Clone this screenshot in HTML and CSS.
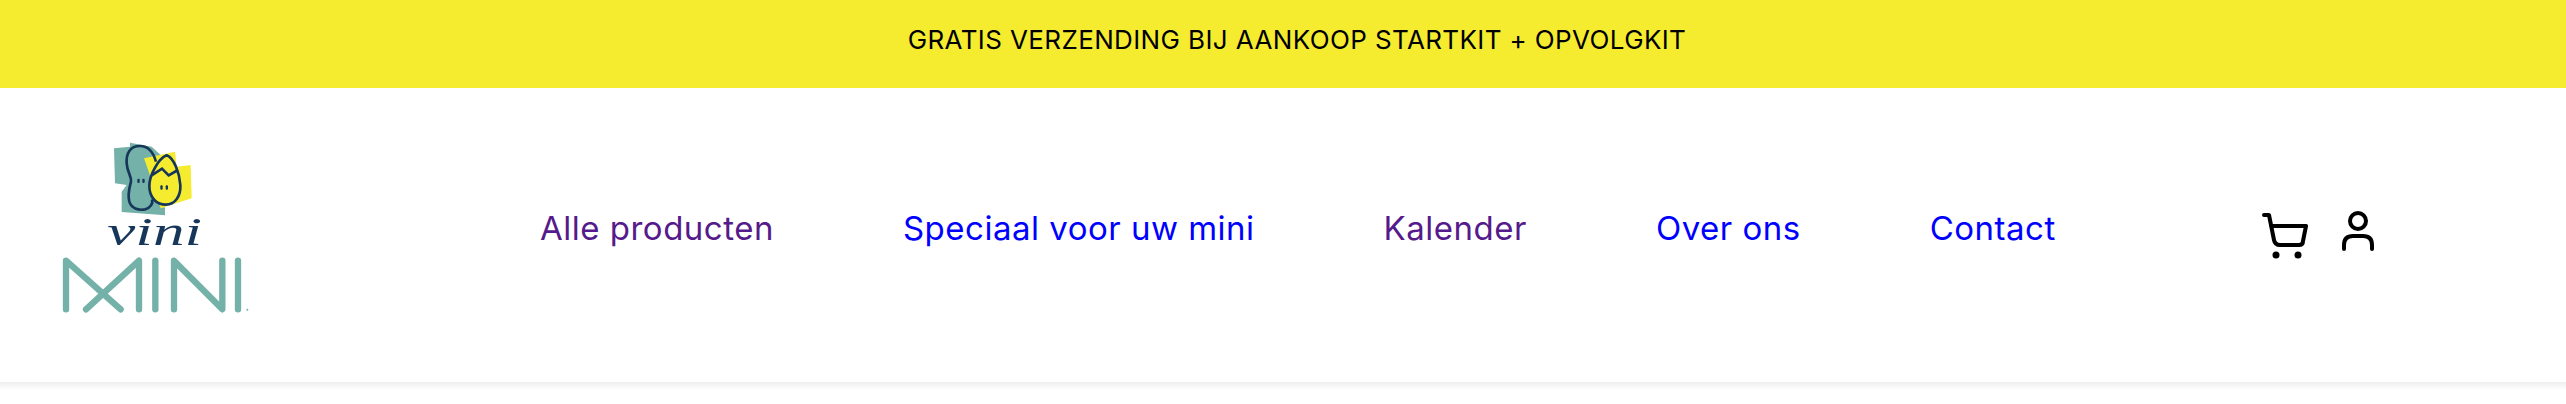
FILE: index.html
```html
<!DOCTYPE html>
<html lang="nl">
    <head>
        <meta charset="UTF-8" />
        <meta name="viewport" content="width=device-width, initial-scale=1.0" />
        <title>Vini Mini</title>
        <link rel="stylesheet" href="styles.css">
    </head>
    <body>
        <div class="promo-bar">
            <p>GRATIS VERZENDING BIJ AANKOOP STARTKIT + OPVOLGKIT</p>
        </div>
        <header class="site-header">
            <a class="logo" href="#" aria-label="Vini Mini">
                <svg width="240" height="200" viewBox="0 0 720 600">
                    <polygon fill="#74b1a8" points="252,85 300,80 300,68 365,80 392,105 395,262 405,262 405,286 275,276 275,215 290,195 255,190" />
                    <polygon fill="#f6ec2f" points="342,115 435,95 440,140 482,135 485,235 392,265 372,200" />
                    <path fill="none" stroke="#17375a" stroke-width="8" d="M330,78 C300,78 288,100 290,130 C292,160 306,170 303,185 C298,205 292,222 298,245 C304,265 325,272 345,268 C362,264 370,250 366,238 M330,78 C350,78 368,90 378,125" />
                    <path fill="#f6ec2f" stroke="#17375a" stroke-width="8" d="M410,106 C385,116 358,165 358,198 C358,235 382,254 407,254 C435,254 453,228 451,195 C449,160 432,114 410,106 Z" />
                    <polyline fill="none" stroke="#17375a" stroke-width="8" points="365,166 396,146 416,166 444,150" />
                    <g fill="#17375a">
                        <rect x="322" y="176" width="7" height="13" rx="3" />
                        <rect x="337" y="176" width="7" height="13" rx="3" />
                        <rect x="391" y="196" width="7" height="13" rx="3" />
                        <rect x="407" y="196" width="7" height="13" rx="3" />
                    </g>
                    <text class="logo-vini" x="232" y="374" textLength="284" lengthAdjust="spacingAndGlyphs">vini</text>
                    <g fill="none" stroke="#74b1a8" stroke-width="19" stroke-linecap="round" stroke-linejoin="round">
                        <polyline points="108,568 108,422 272,568" />
                        <polyline points="168,568 327,422 327,568" />
                        <line x1="376" y1="422" x2="376" y2="568" />
                        <polyline points="432,568 432,422 577,568 577,422" />
                        <line x1="624" y1="422" x2="624" y2="568" />
                    </g>
                    <circle cx="652" cy="569" r="3" fill="#74b1a8" />
                </svg>
            </a>
            <nav class="main-nav">
                <a class="visited" href="#">Alle producten</a>
                <a href="#">Speciaal voor uw mini</a>
                <a class="visited" href="#">Kalender</a>
                <a href="#">Over ons</a>
                <a href="#">Contact</a>
            </nav>
            <div class="header-icons">
                <a href="#" aria-label="Winkelwagen">
                    <svg width="46" height="48" viewBox="0 0 46 48" fill="none" stroke="#000" stroke-width="4" stroke-linecap="round" stroke-linejoin="round">
                        <path d="M2,4 H7 L12,29 Q13,34 18,34 H37 Q41,34 41,30 L44,15 H9" />
                        <circle cx="14" cy="44" r="3.5" fill="#000" stroke="none" />
                        <circle cx="36" cy="44" r="3.5" fill="#000" stroke="none" />
                    </svg>
                </a>
                <a href="#" aria-label="Account">
                    <svg width="32" height="48" viewBox="0 0 32 48" fill="none" stroke="#000" stroke-width="4" stroke-linecap="round">
                        <circle cx="16" cy="10" r="8" />
                        <path d="M2,38 V34 Q2,25 11,25 H21 Q30,25 30,34 V38" />
                    </svg>
                </a>
            </div>
        </header>
        <div class="header-shade"></div>
    </body>
</html>
```

FILE: styles.css
```css
body {
    font-family: Inter, "Noto Sans", Arial, sans-serif;
    background-color: #ffffff;
    margin: 0;
    padding: 0;
    color: #000000;
}
.promo-bar {
    display: flex;
    justify-content: center;
    align-items: center;
    height: 80px;
    padding: 0 0 8px 28px;
    background-color: #f5ec30;
}
.promo-bar p {
    margin: 0;
    font-size: 26px;
    line-height: 32px;
    letter-spacing: 0.38px;
    white-space: nowrap;
}
.site-header {
    display: flex;
    align-items: center;
    height: 294px;
}
.header-shade {
    height: 8px;
    background: linear-gradient(#eeeeee, #ffffff);
}
.logo {
    display: flex;
    align-self: flex-start;
    margin-left: 30px;
    margin-top: 32px;
}
.logo-vini {
    font-family: "Liberation Serif", serif;
    font-style: italic;
    font-size: 120px;
    fill: #17375a;
}
.main-nav {
    display: flex;
    gap: 129px;
    margin-left: 270px;
    margin-top: -14px;
}
.main-nav a {
    color: #0000ff;
    font-size: 33px;
    line-height: 40px;
    letter-spacing: 0.5px;
    text-decoration: none;
    white-space: nowrap;
}
.main-nav a.visited {
    color: #551a8b;
}
.header-icons {
    display: flex;
    align-items: center;
    gap: 34px;
    margin-left: 206px;
}
.header-icons a {
    display: flex;
}
```
